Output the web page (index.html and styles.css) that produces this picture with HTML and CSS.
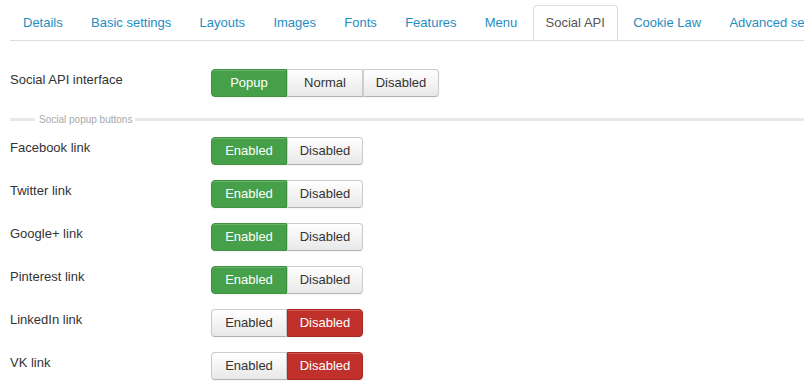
FILE: index.html
```html
<!DOCTYPE html>
<html>
<head>
<meta charset="utf-8">
<link rel="stylesheet" href="styles.css">
</head>
<body>
<div class="page">
  <ul class="tabs">
    <li class="tab">Details</li>
    <li class="tab">Basic settings</li>
    <li class="tab">Layouts</li>
    <li class="tab">Images</li>
    <li class="tab">Fonts</li>
    <li class="tab">Features</li>
    <li class="tab">Menu</li>
    <li class="tab active">Social API</li>
    <li class="tab">Cookie Law</li>
    <li class="tab">Advanced settings</li>
  </ul>

  <div class="content">
    <div class="row">
      <div class="label">Social API interface</div>
      <div class="group">
        <span class="btn green">Popup</span><span class="btn">Normal</span><span class="btn">Disabled</span>
      </div>
    </div>

    <div class="legend"><span class="legend-line short"></span><span class="legend-text">Social popup buttons</span><span class="legend-line long"></span></div>

    <div class="row">
      <div class="label">Facebook link</div>
      <div class="group"><span class="btn green">Enabled</span><span class="btn">Disabled</span></div>
    </div>
    <div class="row">
      <div class="label">Twitter link</div>
      <div class="group"><span class="btn green">Enabled</span><span class="btn">Disabled</span></div>
    </div>
    <div class="row">
      <div class="label">Google+ link</div>
      <div class="group"><span class="btn green">Enabled</span><span class="btn">Disabled</span></div>
    </div>
    <div class="row">
      <div class="label">Pinterest link</div>
      <div class="group"><span class="btn green">Enabled</span><span class="btn">Disabled</span></div>
    </div>
    <div class="row">
      <div class="label">LinkedIn link</div>
      <div class="group"><span class="btn">Enabled</span><span class="btn red">Disabled</span></div>
    </div>
    <div class="row">
      <div class="label">VK link</div>
      <div class="group"><span class="btn">Enabled</span><span class="btn red">Disabled</span></div>
    </div>
  </div>
</div>
</body>
</html>
```

FILE: styles.css
```css
* { box-sizing: border-box; }
html, body { margin: 0; padding: 0; background: #fff; }
body {
  font-family: "Liberation Sans", Arial, sans-serif;
  font-size: 13px;
  color: #333;
  overflow: hidden;
}
.page { padding-left: 10px; width: 804px; }

.tabs {
  list-style: none;
  margin: 5px 0 0 0;
  padding: 0;
  display: flex;
  flex-wrap: nowrap;
  border-bottom: 1px solid #ddd;
  white-space: nowrap;
  overflow: hidden;
}
.tab {
  flex: none;
  height: 36px;
  line-height: 34px;
  padding: 0 12px;
  margin-right: 2.3px;
  margin-bottom: -1px;
  border: 1px solid transparent;
  border-radius: 4px 4px 0 0;
  color: #1f8dc0;
}
.tab.active {
  color: #555;
  border-color: #ddd;
  border-bottom-color: #fff;
  background: #fff;
}

.content { padding-top: 28px; }

.row {
  display: flex;
  align-items: flex-start;
  height: 43px;
}
.label {
  width: 201px;
  flex: none;
  line-height: 18px;
  margin-top: 1.5px;
}
.group { display: flex; }
.btn {
  width: 76px;
  height: 28px;
  line-height: 26px;
  text-align: center;
  color: #333;
  border: 1px solid #ccc;
  border-bottom-color: #b3b3b3;
  background: linear-gradient(#ffffff, #e8e8e8);
  box-shadow: inset 0 1px 0 rgba(255,255,255,0.2), 0 1px 2px rgba(0,0,0,0.05);
}
.btn + .btn { border-left-color: #d0d0d0; }
.btn:first-child { border-radius: 4px 0 0 4px; }
.btn:last-child { border-radius: 0 4px 4px 0; }
.btn.green {
  background: #46a049;
  border-color: #3f9142;
  color: #fff;
}
.btn.red {
  background: #c0312b;
  border-color: #a92a25;
  color: #fff;
}

.legend {
  display: flex;
  align-items: center;
  height: 18px;
  margin-top: -2px;
  margin-bottom: 9px;
}
.legend-line {
  height: 3px;
  background: #e8e8e8;
}
.legend-line.short { width: 25px; flex: none; }
.legend-line.long { flex: 1; }
.legend-text {
  font-size: 10px;
  color: #a8a8a8;
  padding: 0 3px 0 4px;
  white-space: nowrap;
}
```
